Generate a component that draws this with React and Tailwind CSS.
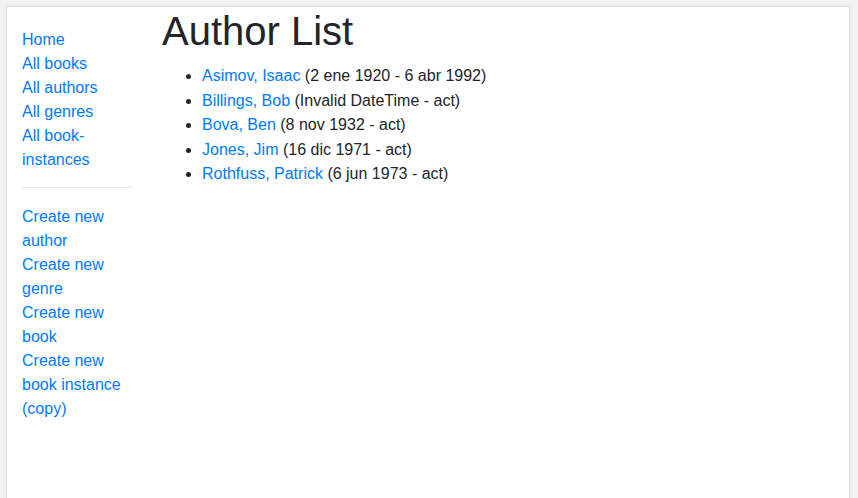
import React from 'react'

const sideLinks = ['Home', 'All books', 'All authors', 'All genres', 'All book-instances']
const createLinks = ['Create new author', 'Create new genre', 'Create new book', 'Create new book instance (copy)']

const authors = [
  { name: 'Asimov, Isaac', life: '(2 ene 1920 - 6 abr 1992)' },
  { name: 'Billings, Bob', life: '(Invalid DateTime - act)' },
  { name: 'Bova, Ben', life: '(8 nov 1932 - act)' },
  { name: 'Jones, Jim', life: '(16 dic 1971 - act)' },
  { name: 'Rothfuss, Patrick', life: '(6 jun 1973 - act)' }
]

export default function App() {
  return (
    <div className="h-[498px] overflow-hidden bg-[#f2f2f2] pt-[6px] font-['Liberation_Sans',Arial,sans-serif] text-[16px] text-[#212529]">
      <div className="ml-[6px] w-[844px] h-[520px] bg-white border border-[#dedede] shadow-[1px_0_3px_rgba(0,0,0,0.06)] flex">
        {/* Sidebar */}
        <div className="w-[110px] ml-[15px] shrink-0">
          <ul className="mt-[21px] leading-6">
            {sideLinks.map(l => (
              <li key={l}><a href="#" className="text-[#007bff]">{l}</a></li>
            ))}
          </ul>
          <hr className="mt-[15px] mb-[17px] border-0 border-t border-[#e5e5e5]" />
          <ul className="leading-6">
            {createLinks.map(l => (
              <li key={l}><a href="#" className="text-[#007bff]">{l}</a></li>
            ))}
          </ul>
        </div>

        {/* Main */}
        <div className="ml-[30px] flex-1">
          <h1 className="text-[40px] leading-[48px] font-normal mb-[9px]">Author List</h1>
          <ul className="list-disc pl-10 leading-[24.5px]">
            {authors.map(a => (
              <li key={a.name}>
                <a href="#" className="text-[#007bff]">{a.name}</a> {a.life}
              </li>
            ))}
          </ul>
        </div>
      </div>
    </div>
  )
}
